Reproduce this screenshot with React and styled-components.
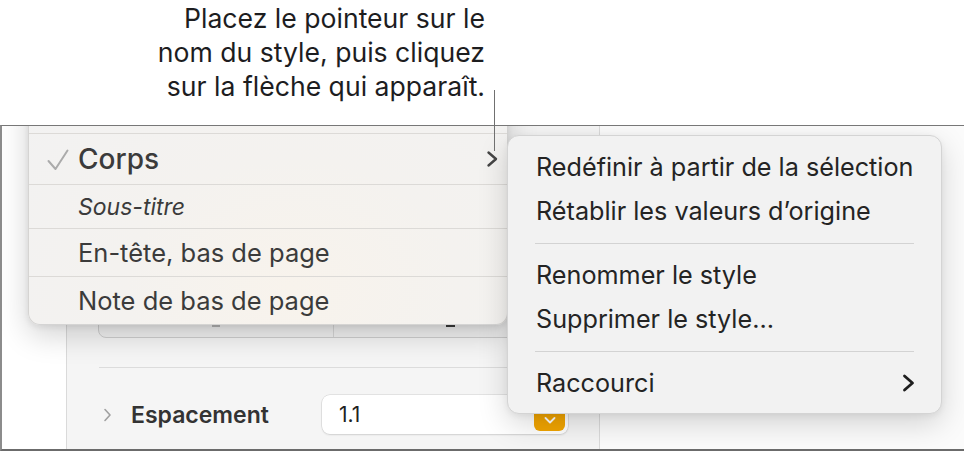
import React from "react";
import styled, { createGlobalStyle } from "styled-components";

const GlobalStyle = createGlobalStyle`
  html, body { margin: 0; padding: 0; background: #fff; }
  body { font-family: Inter, "Liberation Sans", sans-serif; -webkit-font-smoothing: antialiased; }
`;

const Page = styled.div`
  position: relative;
  width: 964px;
  height: 451px;
  overflow: hidden;
  background: #fff;
  display: flex;
  flex-direction: column;
`;

const Callout = styled.div`
  height: 125px;
  flex: none;
`;

const CalloutText = styled.p`
  margin: 0;
  width: 485px;
  padding-top: 1px;
  text-align: right;
  font-size: 26.6px;
  line-height: 34px;
  color: #1d1d1f;
`;

const Leader = styled.div`
  position: absolute;
  left: 494px;
  top: 90px;
  width: 1px;
  height: 61px;
  background: #707070;
  z-index: 5;
`;

const Frame = styled.div`
  position: relative;
  z-index: 0;
  flex: 1;
  display: flex;
  border-top: 1px solid #777;
  border-left: 2px solid #8c8c8c;
  border-bottom: 2px solid #6b6b6b;
  overflow: hidden;
`;

const Gutter = styled.div`
  width: 64px;
  flex: none;
  background: #fff;
`;

const Panel = styled.div`
  width: 532px;
  flex: none;
  background: #f5f5f5;
  border-left: 1px solid #dadada;
  border-right: 1px solid #dadada;
  display: flex;
  flex-direction: column;
  padding-top: 152px;
`;

const RightArea = styled.div`
  flex: 1;
  background: #fbfbfb;
`;

const Segmented = styled.div`
  margin-left: 31px;
  width: 470px;
  height: 60px;
  box-sizing: border-box;
  border: 1px solid #cfcfcf;
  border-radius: 8px;
  background: #f0f0f0;
  display: grid;
  grid-template-columns: 1fr 1fr;
`;

const Segment = styled.div`
  display: flex;
  justify-content: center;
  align-items: flex-end;
  padding-bottom: 10px;
  & + & { border-left: 1px solid #d6d6d6; }
`;

const Mark = styled.span`
  width: ${(p) => (p.$dark ? 9 : 8)}px;
  height: ${(p) => (p.$dark ? 3 : 2)}px;
  background: ${(p) => (p.$dark ? "#3a3a3a" : "#b4b4b4")};
`;

const Rule = styled.div`
  margin: 29px 0 0 32px;
  height: 1px;
  background: #dcdcdc;
`;

const FieldRow = styled.div`
  margin-top: 27px;
  height: 39px;
  display: flex;
  align-items: center;
  padding: 0 31px 0 36px;
`;

const FieldLabel = styled.span`
  flex: 1;
  margin-left: 19px;
  font-size: 23px;
  font-weight: 600;
  color: #333;
`;

const Input = styled.div`
  width: 246px;
  height: 39px;
  box-sizing: border-box;
  background: #fff;
  border-radius: 8px;
  box-shadow: 0 0 0 0.5px #cfcfcf, 0 1px 2px rgba(0, 0, 0, 0.12);
  display: flex;
  align-items: center;
  padding: 0 3px 0 17px;
  font-size: 21px;
  color: #222;
`;

const Stepper = styled.div`
  margin-left: auto;
  width: 31px;
  height: 32px;
  border-radius: 6px;
  background: #f2a500;
  display: flex;
  flex-direction: column;
  align-items: center;
  justify-content: center;
  gap: 4px;
`;

const StylePopup = styled.div`
  position: absolute;
  left: 26px;
  top: -42px;
  width: 480px;
  box-sizing: border-box;
  border: 1px solid rgba(0, 0, 0, 0.12);
  border-radius: 12px;
  background: radial-gradient(ellipse at 55% 85%, #f8f3ec 0%, #f4f2ef 45%, #f2f2f2 100%);
  box-shadow: 0 10px 30px rgba(0, 0, 0, 0.18), 0 2px 6px rgba(0, 0, 0, 0.08);
  overflow: hidden;
`;

const StyleRow = styled.div`
  height: ${(p) => p.$h}px;
  display: flex;
  align-items: center;
  padding: 0 8px 0 49px;
  position: relative;
  color: #3b3b3b;
  font-size: ${(p) => p.$size || 25.5}px;
  font-weight: ${(p) => p.$weight || 400};
  font-style: ${(p) => (p.$italic ? "italic" : "normal")};
  white-space: nowrap;
  border-bottom: ${(p) => (p.$last ? "none" : "1px solid #dcdad7")};
`;

const Check = styled.svg`
  position: absolute;
  left: 18px;
  top: 15px;
`;

const RowChevron = styled.svg`
  margin-left: auto;
`;

const ContextMenu = styled.div`
  position: absolute;
  left: 505px;
  top: 9px;
  width: 435px;
  box-sizing: border-box;
  padding: 9px 0 8px;
  border: 1px solid #d4d4d4;
  border-radius: 12px;
  background: #f2f2f2;
  box-shadow: 0 10px 30px rgba(0, 0, 0, 0.16), 0 2px 6px rgba(0, 0, 0, 0.06);
`;

const MenuItem = styled.div`
  height: 44px;
  display: flex;
  align-items: center;
  padding: 0 28px;
  font-size: 25.2px;
  white-space: nowrap;
  color: #242424;
`;

const MenuSeparator = styled.div`
  height: 20px;
  display: flex;
  align-items: center;
  padding: 0 27px 0 27px;
  &::after {
    content: "";
    flex: 1;
    height: 1px;
    background: #d3d3d3;
  }
`;

const TrailingIcon = styled.span`
  margin-left: auto;
  margin-right: -2px;
  display: flex;
`;

function Chevron({ color = "#444", w = 2.4 }) {
  return (
    <svg width="13" height="18" viewBox="0 0 13 18" fill="none">
      <path d="M2.5 2 L10.5 9 L2.5 16" stroke={color} strokeWidth={w} strokeLinecap="round" strokeLinejoin="round" />
    </svg>
  );
}

export default function App() {
  return (
    <>
      <GlobalStyle />
      <Page>
        <Callout>
          <CalloutText>
            Placez le pointeur sur le
            <br />
            nom du style, puis cliquez
            <br />
            sur la flèche qui apparaît.
          </CalloutText>
        </Callout>
        <Leader />
        <Frame>
          <Gutter />
          <Panel>
            <Segmented>
              <Segment>
                <Mark />
              </Segment>
              <Segment>
                <Mark $dark />
              </Segment>
            </Segmented>
            <Rule />
            <FieldRow>
              <svg width="9" height="14" viewBox="0 0 9 14" fill="none">
                <path d="M2 1.5 L7 7 L2 12.5" stroke="#a0a0a0" strokeWidth="1.6" strokeLinecap="round" strokeLinejoin="round" />
              </svg>
              <FieldLabel>Espacement</FieldLabel>
              <Input>
                1.1
                <Stepper>
                  <svg width="12" height="7" viewBox="0 0 12 7" fill="none">
                    <path d="M1.5 6 L6 1.5 L10.5 6" stroke="#fff" strokeWidth="1.8" strokeLinecap="round" strokeLinejoin="round" />
                  </svg>
                  <svg width="12" height="7" viewBox="0 0 12 7" fill="none">
                    <path d="M1.5 1 L6 5.5 L10.5 1" stroke="#fff" strokeWidth="1.8" strokeLinecap="round" strokeLinejoin="round" />
                  </svg>
                </Stepper>
              </Input>
            </FieldRow>
          </Panel>
          <RightArea />

          <StylePopup>
            <StyleRow $h={48} />
            <StyleRow $h={50} $size={28} $weight={500}>
              <Check width="22" height="22" viewBox="0 0 22 22" fill="none">
                <path d="M1.5 12 L8.5 20 L20.5 1.5" stroke="#ababab" strokeWidth="2" strokeLinecap="round" strokeLinejoin="round" />
              </Check>
              Corps
              <RowChevron width="13" height="18" viewBox="0 0 13 18" fill="none">
                <path d="M2.5 2.5 L10 9 L2.5 15.5" stroke="#454545" strokeWidth="2.4" strokeLinecap="round" strokeLinejoin="round" />
              </RowChevron>
            </StyleRow>
            <StyleRow $h={43} $size={23} $italic>
              Sous-titre
            </StyleRow>
            <StyleRow $h={47}>En-tête, bas de page</StyleRow>
            <StyleRow $h={47} $last>
              Note de bas de page
            </StyleRow>
          </StylePopup>

          <ContextMenu>
            <MenuItem>Redéfinir à partir de la sélection</MenuItem>
            <MenuItem>Rétablir les valeurs d’origine</MenuItem>
            <MenuSeparator />
            <MenuItem>Renommer le style</MenuItem>
            <MenuItem>Supprimer le style…</MenuItem>
            <MenuSeparator />
            <MenuItem>
              Raccourci
              <TrailingIcon>
                <Chevron color="#1e1e1e" w={2.8} />
              </TrailingIcon>
            </MenuItem>
          </ContextMenu>
        </Frame>
      </Page>
    </>
  );
}
